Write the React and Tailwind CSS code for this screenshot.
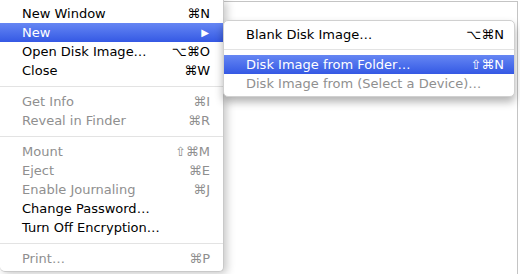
import React from 'react';

const mainItems = [
  { label: "New Window", keys: "⌘N" },
  { label: "New", arrow: true, active: true },
  { label: "Open Disk Image…", keys: "⌥⌘O" },
  { label: "Close", keys: "⌘W" },
  { sep: true },
  { label: "Get Info", keys: "⌘I", disabled: true },
  { label: "Reveal in Finder", keys: "⌘R", disabled: true },
  { sep: true },
  { label: "Mount", keys: "⇧⌘M", disabled: true },
  { label: "Eject", keys: "⌘E", disabled: true },
  { label: "Enable Journaling", keys: "⌘J", disabled: true },
  { label: "Change Password…" },
  { label: "Turn Off Encryption…" },
  { sep: true },
  { label: "Print…", keys: "⌘P", disabled: true },
];

const subItems = [
  { label: "Blank Disk Image…", keys: "⌥⌘N" },
  { sep: true, short: true },
  { label: "Disk Image from Folder…", keys: "⇧⌘N", active: true },
  { label: "Disk Image from (Select a Device)…", disabled: true },
];

function MenuRow({ item, padRight }) {
  if (item.sep) {
    return (
      <div className={`${item.short ? "h-[11px]" : "h-[12px]"} flex items-center`}>
        <div className="h-px w-full bg-[#e3e3e3]" />
      </div>
    );
  }
  const color = item.active
    ? "text-white bg-linear-to-b from-[#6686f3] to-[#3558e4]"
    : item.disabled
    ? "text-[#8f8f8f]"
    : "text-black";
  return (
    <div className={`h-[19px] flex items-center pl-[22px] ${padRight} ${color}`}>
      <span className="flex-1 whitespace-nowrap">{item.label}</span>
      {item.keys && <span className="whitespace-nowrap">{item.keys}</span>}
      {item.arrow && <span className="text-[10px] pr-[1px]">▶</span>}
    </div>
  );
}

export default function App() {
  return (
    <div
      className="w-[520px] h-[274px] bg-white flex overflow-hidden text-[13px] leading-none"
      style={{ fontFamily: '"DejaVu Sans", "Lucida Grande", sans-serif' }}
    >
      <div className="relative z-10 w-[224px] h-[272px] shrink-0 bg-white border-r border-b border-[#c9c9c9] rounded-b-[5px] pt-[4px] shadow-[3px_2px_8px_rgba(0,0,0,0.22)]">
        {mainItems.map((item, i) => (
          <MenuRow key={i} item={item} padRight="pr-[13px]" />
        ))}
      </div>

      <div className="flex-1 h-full mt-[1px] border-t border-r border-[#c4c4c4] mr-[2px] bg-white">
        <div className="relative z-20 -ml-px mt-[18px] mr-[2px] h-[77px] bg-white border border-[#d0d0d0] rounded-[5px] pt-[4px] shadow-[0_5px_9px_rgba(0,0,0,0.3)]">
          {subItems.map((item, i) => (
            <MenuRow key={i} item={item} padRight="pr-[10px]" />
          ))}
        </div>
      </div>
    </div>
  );
}
